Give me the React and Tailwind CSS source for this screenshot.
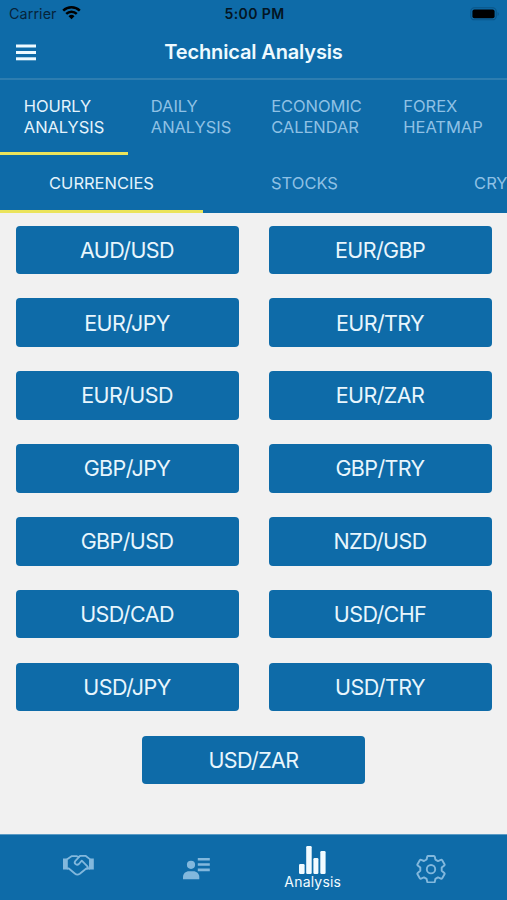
import React from 'react';

const MAIN_TABS = [
  { lines: ['HOURLY', 'ANALYSIS'], width: 'w-[128px]', active: true },
  { lines: ['DAILY', 'ANALYSIS'], width: 'w-[126px]' },
  { lines: ['ECONOMIC', 'CALENDAR'], width: 'w-[125px]' },
  { lines: ['FOREX', 'HEATMAP'], width: 'w-[128px]' },
];

const SUB_TABS = [
  { label: 'CURRENCIES', active: true },
  { label: 'STOCKS' },
  { label: 'CRYPTO' },
];

const PAIRS = [
  'AUD/USD', 'EUR/GBP',
  'EUR/JPY', 'EUR/TRY',
  'EUR/USD', 'EUR/ZAR',
  'GBP/JPY', 'GBP/TRY',
  'GBP/USD', 'NZD/USD',
  'USD/CAD', 'USD/CHF',
  'USD/JPY', 'USD/TRY',
  'USD/ZAR',
];

const StatusBar = () => (
  <div className="h-[26px] flex items-center justify-between pl-[9px] pr-[7px] pt-[1px] text-black">
    <div className="flex-1 flex items-center gap-[5px]">
      <span className="text-[14.3px] tracking-[0.1px] text-[#06243a]">Carrier</span>
      <svg width="19" height="15" viewBox="0 0 19 15" fill="none" stroke="currentColor" strokeWidth="2.5" className="-mt-[2px]">
        <path d="M1.2 5.6a12 12 0 0 1 16.6 0" />
        <path d="M4.2 8.8a7.6 7.6 0 0 1 10.6 0" />
        <path d="M9.5 14.2l-3-3a4.3 4.3 0 0 1 6 0z" fill="currentColor" stroke="none" />
      </svg>
    </div>
    <span className="text-[14px] font-semibold tracking-[0.4px] text-[#031523]">5:00 PM</span>
    <div className="flex-1 flex justify-end">
      <svg width="30" height="14" viewBox="0 0 30 14">
        <rect x="0.8" y="0.8" width="25.4" height="12" rx="3.6" fill="none" stroke="#0b5587" strokeWidth="1.1" />
        <rect x="2.4" y="2.4" width="22.2" height="8.8" rx="2" fill="#000" />
        <path d="M27.6 5v4c1.5-.5 1.5-3.5 0-4z" fill="#0b5587" />
      </svg>
    </div>
  </div>
);

const Header = () => (
  <header className="h-[54px] flex items-center px-4 border-b-2 border-[#2d7db0] text-[#eefaff]">
    <div className="flex-1">
      <button className="w-5 flex flex-col" aria-label="Menu">
        <svg width="20" height="17" viewBox="0 0 20 17" fill="currentColor">
          <rect y="0.5" width="20" height="3" />
          <rect y="7" width="20" height="3" />
          <rect y="13.3" width="20" height="3" />
        </svg>
      </button>
    </div>
    <h1 className="text-[20px] font-semibold tracking-[-0.15px]">Technical Analysis</h1>
    <div className="flex-1" />
  </header>
);

const HandshakeIcon = () => (
  <svg width="31" height="21" viewBox="0 0 31 21" fill="none" stroke="currentColor" strokeWidth="1.8" strokeLinejoin="round" strokeLinecap="round">
    <path d="M0 3.4h4.8v11H0zM26 3.4h4.8v11H26z" fill="currentColor" stroke="none" />
    <path d="M4.5 3.9 8.500 1.200h5l2 .8 2-1.200h5l4 3.100" />
    <path d="M4.5 13.500h1.300l6 5c1.500 1.300 3.500 1.300 5 .2l6.500-5.200h3" />
    <path d="M16.5 1.500l-4.300 4.700c-1.600 2 1.500 4.800 3.700 2.800l2.900-3.400 5.600 5.700c.8.800.4 1.800-.6 2.500" />
  </svg>
);

const ContactIcon = () => (
  <svg width="27" height="22" viewBox="0 0 27 22" fill="currentColor">
    <circle cx="8" cy="6.8" r="4.1" />
    <path d="M0 21.3v-2.200c0-3.600 2.700-5.800 6-5.800h4.300c3.300 0 6 2.200 6 5.800v2.200z" />
    <path d="M14.800 0h12v2.600h-12zM14.800 5.200h12v2.600h-12zM14.800 10.600h12v2.600h-12z" />
  </svg>
);

const ChartIcon = () => (
  <svg width="27" height="28" viewBox="0 0 27 28" fill="currentColor">
    <rect x="0" y="18" width="5.6" height="10" rx="1.2" />
    <rect x="7.2" y="0" width="5.5" height="28" rx="1.2" />
    <rect x="14.4" y="12" width="5" height="16" rx="1.2" />
    <rect x="21.3" y="5" width="5.3" height="23" rx="1.2" />
  </svg>
);

const GearIcon = () => (
  <svg width="30" height="28" viewBox="-15 -14.2 30 28" fill="none" stroke="currentColor" strokeWidth="1.9" strokeLinejoin="round">
    <path d="M-2.8-13.2h5.600q.8 0 1 .8l.6 2.800 2.600 1.500 2.900-1.200q.8-.3 1.300.4l2.300 4q.4.7-.2 1.200L10.700-1.600v3.200l2.600 2.200q.6.5.2 1.200l-2.300 4q-.5.7-1.300.4l-2.900-1.200-2.600 1.500-.6 2.800q-.2.8-1 .8h-5.600q-.8 0-1-.8l-.6-2.800-2.600-1.500-2.900 1.200q-.8.3-1.300-.4l-2.300-4q-.4-.7.2-1.200l2.600-2.200v-3.200l-2.600-2.200q-.6-.5-.2-1.200l2.300-4q.5-.7 1.300-.4l2.900 1.200 2.600-1.500.6-2.800q.2-.8 1-.8z" />
    <circle r="4.200" />
  </svg>
);

const TabBar = () => (
  <nav className="h-[66px] grid grid-cols-4 pl-[20px] pr-[17px] bg-[#0e6ba8] border-t border-[#5b9bc5] text-[#82b8dd]">
    <div className="flex justify-center pt-[20px]"><HandshakeIcon /></div>
    <div className="flex justify-center pt-[23px]"><ContactIcon /></div>
    <div className="flex flex-col items-center pt-[11px] -ml-[2px] text-[#f2fbff]">
      <ChartIcon />
      <span className="text-[14px] leading-[17px] tracking-[0.2px] -mt-px">Analysis</span>
    </div>
    <div className="flex justify-center pt-[20px] -ml-px"><GearIcon /></div>
  </nav>
);

export default function App() {
  return (
    <div className="w-[507px] h-[900px] flex flex-col overflow-hidden bg-[#f1f1f1] font-['Inter',sans-serif]">
      <div className="bg-[#0e6ba8]">
        <StatusBar />
        <Header />

        <div className="flex h-[75px]">
          {MAIN_TABS.map((tab) => (
            <div
              key={tab.lines.join(' ')}
              className={`${tab.width} flex justify-center items-center border-b-[3px] pt-[1px] ${tab.active ? 'border-[#ebe45c] text-[#e4f3fc]' : 'border-transparent text-[#8fc1e5]'}`}
            >
              <div className="text-[16.5px] leading-[21px] tracking-[-0.05px]">
                {tab.lines[0]}
                <br />
                {tab.lines[1]}
              </div>
            </div>
          ))}
        </div>

        <div className="flex h-[58px] overflow-hidden">
          {SUB_TABS.map((tab) => (
            <div
              key={tab.label}
              className={`w-[203px] shrink-0 flex justify-center items-center border-b-[3px] pt-[2px] text-[16.5px] ${tab.active ? 'border-[#ebe45c] text-[#e4f3fc]' : 'border-transparent text-[#8fc1e5]'}`}
            >
              {tab.label}
            </div>
          ))}
        </div>
      </div>

      <main className="flex-1 flex flex-wrap justify-center content-start gap-x-[30px] gap-y-[24.4px] pt-[12.5px]">
        {PAIRS.map((pair) => (
          <button key={pair} className="w-[223px] h-[48.5px] rounded-[4px] bg-[#0e6ba8] text-[#e8f6fd] text-[21.5px] tracking-[-0.6px]">
            {pair}
          </button>
        ))}
      </main>

      <TabBar />
    </div>
  );
}
